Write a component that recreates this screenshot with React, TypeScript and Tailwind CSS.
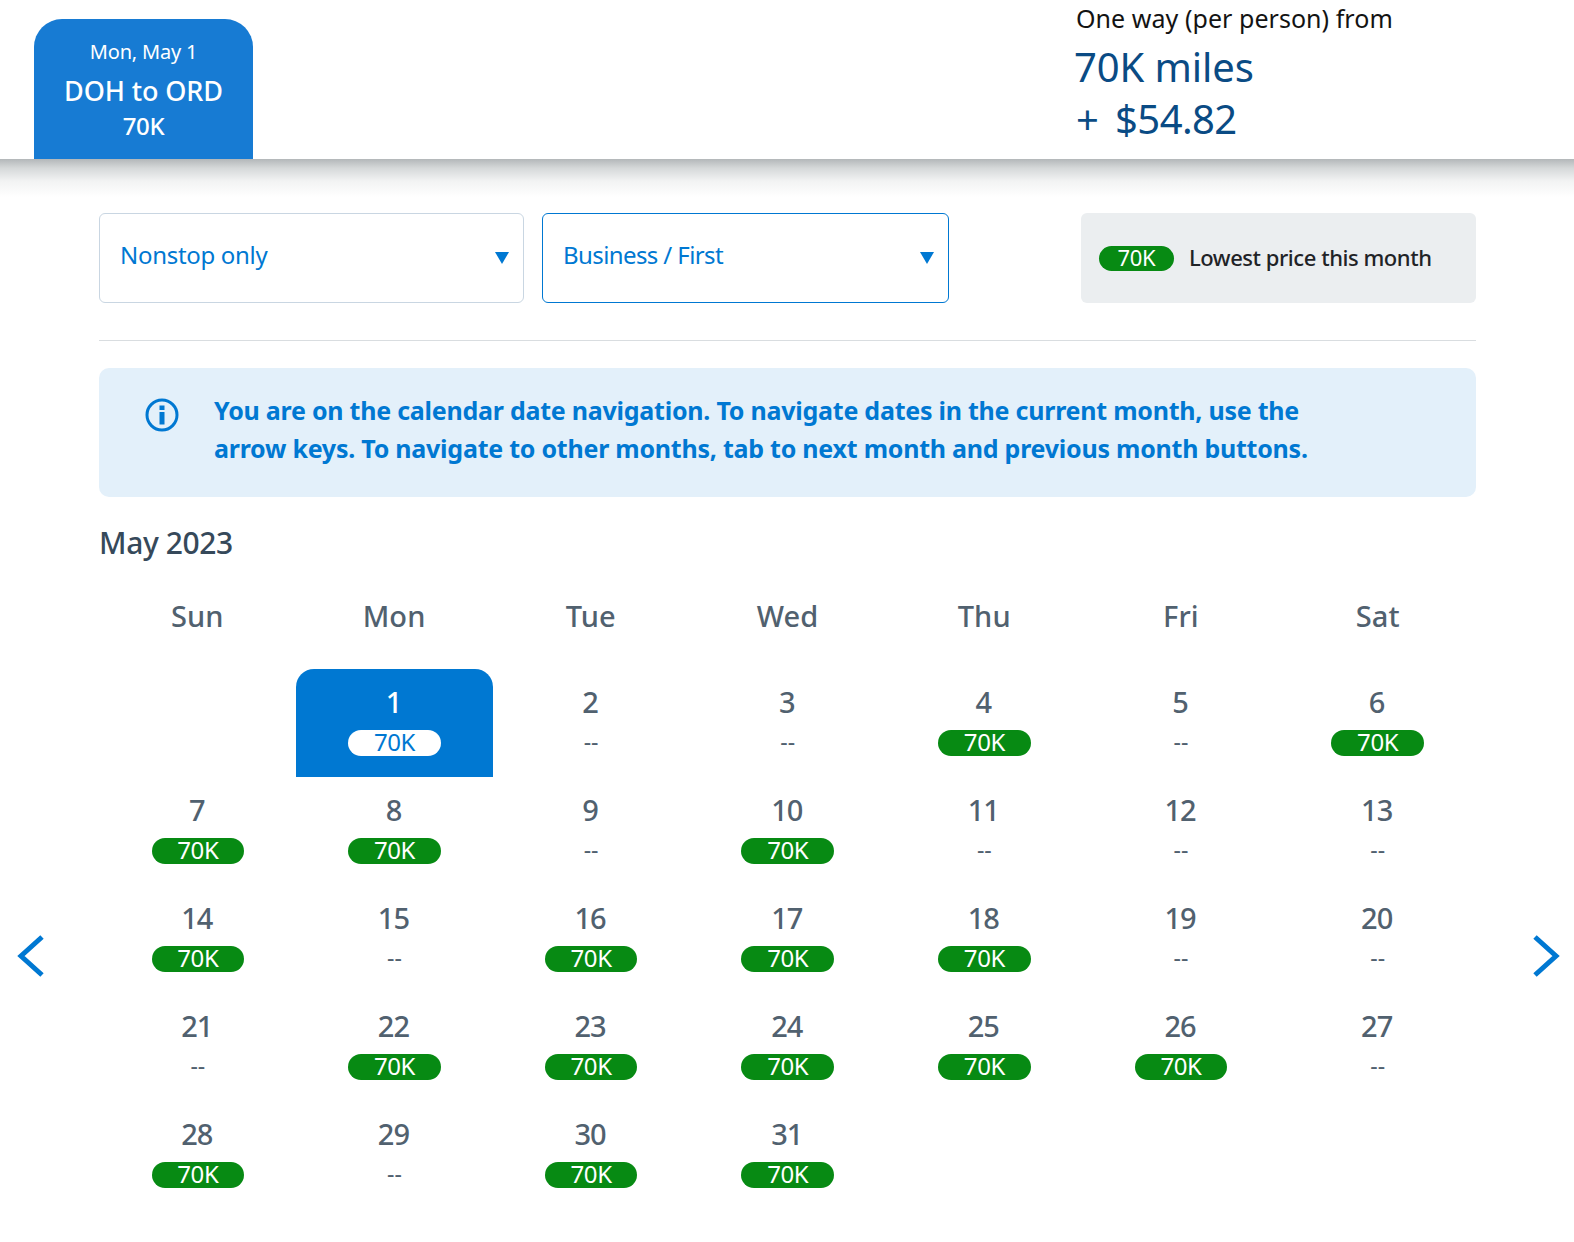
import React from "react";

const weekdays = ["Sun", "Mon", "Tue", "Wed", "Thu", "Fri", "Sat"];
const priced = new Set([1, 4, 6, 7, 8, 10, 14, 16, 17, 18, 22, 23, 24, 25, 26, 28, 30, 31]);

function Caret() {
  return (
    <svg width="14" height="12" viewBox="0 0 14 12" className="shrink-0">
      <path d="M0 0H14L7 12Z" fill="#0078d2" />
    </svg>
  );
}

function Day({ n }: { n: number }) {
  const selected = n === 1;
  const has = priced.has(n);
  return (
    <div className={`h-[108px] flex flex-col items-center pt-[16px] ${selected ? "bg-[#0078d2] rounded-t-[18px]" : ""}`}>
      <div className={`pr-[2px] text-[29px] leading-[34px] tracking-[-1px] font-medium ${selected ? "text-white" : "text-[#51616f]"}`}>{n}</div>
      {has ? (
        <div className={`mt-[11px] w-[92.5px] h-[26px] rounded-[13px] flex justify-center text-[24px] leading-[23px] tracking-[-0.4px] ${selected ? "bg-white text-[#0078d2]" : "bg-[#078a13] text-white"}`}>70K</div>
      ) : (
        <div className="mt-[11px] h-[26px] text-[23px] leading-[22px] text-[#51616f]">--</div>
      )}
    </div>
  );
}

export default function App() {
  return (
    <div className="relative w-[1574px] h-[1242px] bg-white overflow-hidden font-['Noto_Sans',sans-serif]">
      <header className="h-[159px] flex">
        <div className="ml-[34px] mt-[19px] w-[219px] h-[140px] rounded-t-[28px] bg-[#177bd3] text-white flex flex-col items-center pt-[19px]">
          <div className="text-[20px] leading-[28px] tracking-[-0.2px]">Mon, May 1</div>
          <div className="mt-[7px] text-[27px] leading-[36px] font-medium tracking-[-0.1px]">DOH to ORD</div>
          <div className="text-[24px] leading-[34px] font-medium tracking-[-0.3px]">70K</div>
        </div>
        <div className="ml-[823px] flex flex-col">
          <div className="-mt-px text-[25px] leading-[38px] text-[#131313] tracking-[0.05px]">One way (per person) from</div>
          <div className="-ml-[2px] mt-[4px] text-[40px] leading-[52px] text-[#0a4b84] tracking-[-0.1px]">70K miles</div>
          <div className="text-[40px] leading-[52px] text-[#0a4b84] tracking-[-0.6px] [word-spacing:7px]">+ $54.82</div>
        </div>
      </header>
      <div className="h-[54px] bg-[linear-gradient(to_bottom,#b3b7b9_0px,#d5d8d9_9px,#f2f3f3_22px,#ffffff_38px)]" />

      <main className="mx-[99px] w-[1377px]">
        <div className="flex h-[90px]">
          <div className="w-[425px] border border-[#c9d6e2] rounded-[6px] flex items-center justify-between pl-[20px] pr-[14px]">
            <span className="pb-[6px] text-[24px] text-[#0078d2] tracking-[-0.3px]">Nonstop only</span>
            <Caret />
          </div>
          <div className="ml-[18px] w-[407px] border border-[#0078d2] rounded-[6px] flex items-center justify-between pl-[20px] pr-[14px]">
            <span className="pb-[6px] text-[24px] text-[#0078d2] tracking-[-0.6px]">Business / First</span>
            <Caret />
          </div>
          <div className="ml-[132px] w-[395px] bg-[#ebeef0] rounded-[6px] flex items-center pl-[18px]">
            <div className="w-[75px] h-[25px] rounded-[13px] bg-[#078a13] text-white flex justify-center text-[22px] leading-[23px] tracking-[-0.3px]">70K</div>
            <span className="ml-[15px] pb-[2px] text-[22px] font-medium text-[#1f2327] tracking-[-0.45px]">Lowest price this month</span>
          </div>
        </div>

        <div className="mt-[37px] h-px bg-[#d9dde0]" />

        <div className="mt-[27px] h-[129px] bg-[#e3f0fa] rounded-[10px] flex pl-[46px] pt-[23px]">
          <svg width="34" height="34" viewBox="0 0 34 34" className="mt-[7px] shrink-0">
            <circle cx="17" cy="17" r="15" fill="none" stroke="#0078d2" strokeWidth="3" />
            <rect x="14.5" y="7.5" width="5" height="4.5" fill="#0078d2" />
            <rect x="14.5" y="14" width="5" height="12.5" fill="#0078d2" />
          </svg>
          <p className="ml-[35px] text-[25px] leading-[38px] font-bold text-[#0078d2] tracking-[-0.24px]">
            You are on the calendar date navigation. To navigate dates in the current month, use the
            <br />
            arrow keys. To navigate to other months, tab to next month and previous month buttons.
          </p>
        </div>

        <h2 className="mt-[24px] text-[30px] leading-[44px] font-medium text-[#36495a] tracking-[-0.4px]">May 2023</h2>

        <div className="mt-[28px] grid grid-cols-7">
          {weekdays.map((d) => (
            <div key={d} className="h-[46px] text-center text-[29px] leading-[46px] font-medium text-[#51616f] tracking-[0.1px]">{d}</div>
          ))}
        </div>

        <div className="mt-[30px] ml-[0.5px] grid grid-cols-7">
          <div />
          {Array.from({ length: 31 }, (_, i) => <Day key={i} n={i + 1} />)}
        </div>
      </main>

      <svg width="32" height="48" viewBox="0 0 32 48" className="absolute left-[16px] top-[932px]">
        <path d="M26 5 L5 24 L26 43" fill="none" stroke="#0078d2" strokeWidth="5" />
      </svg>
      <svg width="32" height="48" viewBox="0 0 32 48" className="absolute left-[1529px] top-[932px]">
        <path d="M6 5 L27 24 L6 43" fill="none" stroke="#0078d2" strokeWidth="5" />
      </svg>
    </div>
  );
}
